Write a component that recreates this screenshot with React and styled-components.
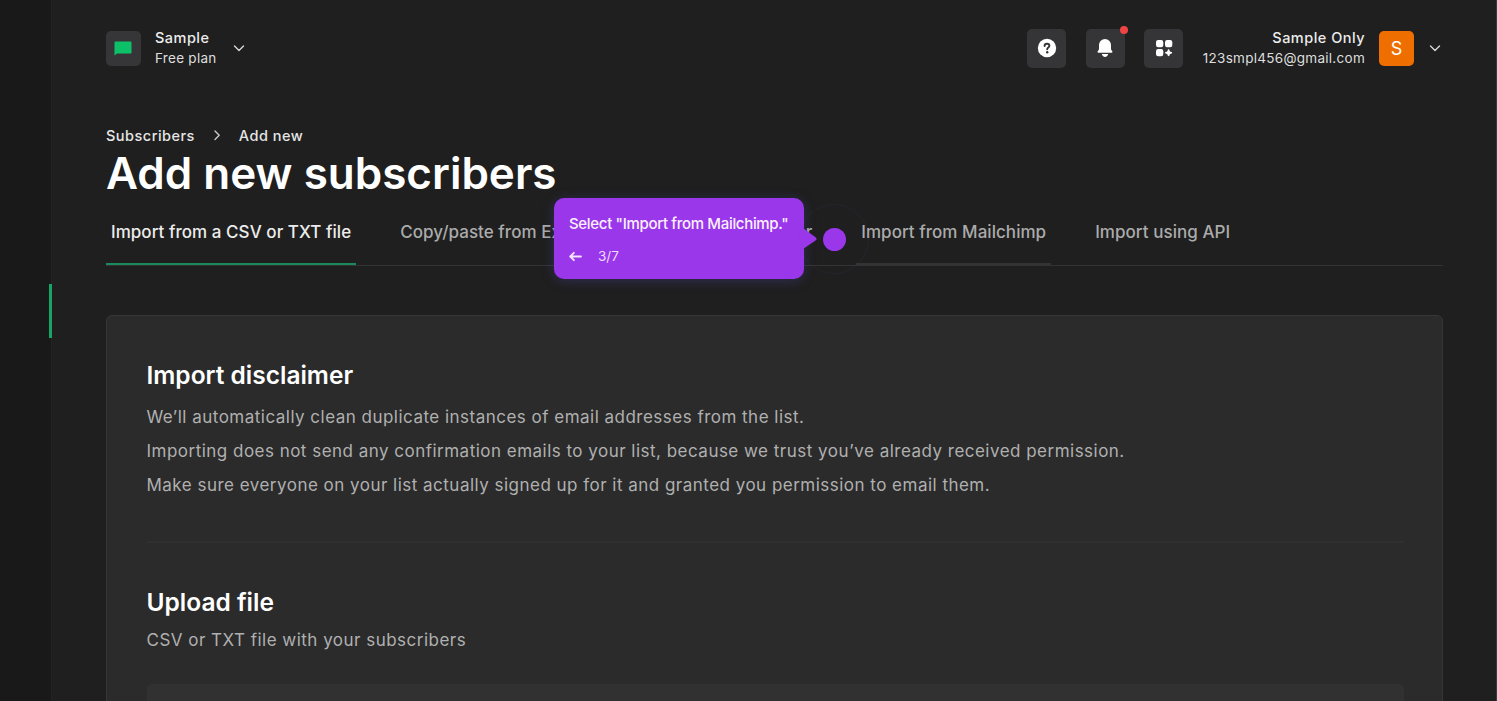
import React from 'react'
import styled, { createGlobalStyle } from 'styled-components'

const tabs = [
  { label: 'Import from a CSV or TXT file', active: true },
  { label: 'Copy/paste from Excel' },
  { label: 'Add single subscriber' },
  { label: 'Import from Mailchimp', hovered: true },
  { label: 'Import using API' },
]

function Chevron({ right }) {
  return right ? (
    <svg width="8" height="12" viewBox="0 0 8 12" fill="none" stroke="#c9c9c9" strokeWidth="1.4" strokeLinecap="round" strokeLinejoin="round">
      <path d="M2 2 6.2 6.2 2 10.4" />
    </svg>
  ) : (
    <svg width="12" height="8" viewBox="0 0 12 8" fill="none" stroke="#d6d6d6" strokeWidth="1.4" strokeLinecap="round" strokeLinejoin="round">
      <path d="M1.5 2 6 6.500 10.500 2" />
    </svg>
  )
}

function App() {
  return (
    <Page>
      <GlobalStyle />
      <Sidebar>
        <Marker />
      </Sidebar>
      <Main>
        <Header>
          <Account>
            <Logo>
              <svg width="18" height="15" viewBox="0 0 18 15" fill="#0cc168">
                <path d="M1.6 0.5h14.8c.7 0 1.1.4 1.1 1.1v9.8c0 .7-.4 1.1-1.1 1.1H3L.5 14.5V1.6C.5.9.9.5 1.6.5z" />
              </svg>
            </Logo>
            <Lines>
              <Name>Sample</Name>
              <Detail>Free plan</Detail>
            </Lines>
            <Chevron />
          </Account>
          <Tools>
            <Tool>
              <svg width="20" height="20" viewBox="0 0 20 20" fill="none">
                <circle cx="10" cy="10" r="9.2" fill="#fff" />
                <path d="M7.6 8c0-1.4 1-2.3 2.4-2.3s2.400.9 2.400 2.100c0 1.600-2.200 1.800-2.200 3.400" stroke="#333335" strokeWidth="1.900" strokeLinecap="round" />
                <circle cx="10.200" cy="14.200" r="1.200" fill="#333335" />
              </svg>
            </Tool>
            <Tool>
              <svg width="18" height="20" viewBox="0 0 18 20" fill="#fff">
                <path d="M9 1a6 6 0 0 0-6 6v3.400c0 1-.4 1.800-1.100 2.700-.6.8-.4 1.700.6 1.700h13c1 0 1.200-.9.6-1.700-.7-.9-1.100-1.700-1.100-2.700V7a6 6 0 0 0-6-6z" />
                <path d="M5.800 16h6.400c-.4 1.800-1.600 2.900-3.200 2.900S6.200 17.800 5.800 16z" />
              </svg>
              <Dot />
            </Tool>
            <Tool>
              <svg width="18" height="18" viewBox="0 0 18 18" fill="#fff">
                <rect x="1" y="1" width="7.300" height="7.300" rx="2.200" />
                <rect x="10" y="1" width="7.300" height="7.300" rx="2.200" />
                <rect x="1" y="10" width="7.300" height="7.300" rx="2.200" />
                <path d="M13.600 10.200c.6 0 .8.400 1 1.200.2.900.4 1.100 1.300 1.300.8.200 1.200.4 1.200 1s-.4.800-1.200 1c-.9.200-1.100.4-1.300 1.300-.2.800-.4 1.200-1 1.200s-.8-.4-1-1.200c-.2-.9-.4-1.100-1.300-1.300-.8-.2-1.200-.4-1.200-1s.4-.8 1.200-1c.9-.2 1.100-.4 1.300-1.300.2-.8.4-1.200 1-1.200z" />
              </svg>
            </Tool>
          </Tools>
          <User>
            <Lines $right>
              <Name>Sample Only</Name>
              <Detail>123smpl456@gmail.com</Detail>
            </Lines>
            <Avatar>S</Avatar>
            <Chevron />
          </User>
        </Header>
        <Crumbs>
          <span>Subscribers</span>
          <Chevron right />
          <span>Add new</span>
        </Crumbs>
        <Title>Add new subscribers</Title>
        <Tabs>
          {tabs.map((tab) => (
            <Tab key={tab.label} $active={tab.active} $hovered={tab.hovered}>{tab.label}</Tab>
          ))}
        </Tabs>
        <Panel>
          <Heading>Import disclaimer</Heading>
          <Text>We’ll automatically clean duplicate instances of email addresses from the list.</Text>
          <Text>Importing does not send any confirmation emails to your list, because we trust you’ve already received permission.</Text>
          <Text>Make sure everyone on your list actually signed up for it and granted you permission to email them.</Text>
          <Divider />
          <Heading $gap="4px">Upload file</Heading>
          <Text>CSV or TXT file with your subscribers</Text>
          <DropZone />
        </Panel>
      </Main>
      <Tooltip>
        <TipText>Select "Import from Mailchimp."</TipText>
        <TipNav>
          <svg width="13" height="11" viewBox="0 0 13 11" fill="none" stroke="#f3e4ff" strokeWidth="1.8" strokeLinecap="round" strokeLinejoin="round">
            <path d="M12 5.5H1.200M4.900 1.800 1.200 5.500l3.700 3.700" />
          </svg>
          <span>3/7</span>
        </TipNav>
        <TipArrow width="15" height="22" viewBox="0 0 15 22" fill="#9a37ea">
          <path d="M0 0 12.500 9.200q2.200 1.800 0 3.300L0 21z" />
        </TipArrow>
      </Tooltip>
      <Ring>
        <Beacon />
      </Ring>
    </Page>
  )
}

const GlobalStyle = createGlobalStyle`
    *{
        box-sizing: border-box;
    }
    body{
        margin: 0;
        background-color: #1f1f1f;
    }
`

const Page = styled.div`
    position: relative;
    display: flex;
    width: 100%;
    height: 701px;
    overflow: hidden;
    background-color: #1f1f1f;
    border-right: 1px solid #3b3b46;
    font-family: Inter, "Liberation Sans", sans-serif;
    white-space: nowrap;
`

const Sidebar = styled.div`
    flex: 0 0 52px;
    display: flex;
    justify-content: flex-end;
    background-color: #191919;
    border-right: 1px solid #232323;
`

const Marker = styled.div`
    width: 3px;
    height: 54px;
    margin-top: 284px;
    margin-right: -1px;
    background-color: #14a567;
`

const Main = styled.div`
    flex: 1;
    display: flex;
    flex-direction: column;
    padding: 0 53px 0 54px;
`

const Header = styled.div`
    flex: 0 0 96px;
    display: flex;
    align-items: center;
`

const Account = styled.div`
    display: flex;
    align-items: center;
    & > svg{
        margin-left: 16px;
    }
`

const Logo = styled.div`
    width: 35px;
    height: 35px;
    margin-right: 14px;
    padding-right: 1px;
    display: flex;
    align-items: center;
    justify-content: center;
    border-radius: 5px;
    background-color: #363638;
`

const Lines = styled.div`
    display: flex;
    flex-direction: column;
    align-items: ${(props) => (props.$right ? 'flex-end' : 'flex-start')};
`

const Name = styled.div`
    font-size: 14.5px;
    line-height: 20px;
    font-weight: 500;
    letter-spacing: 0.48px;
    color: #ececec;
`

const Detail = styled.div`
    font-size: 13.5px;
    line-height: 20px;
    letter-spacing: 0.28px;
    color: #dedede;
`

const Tools = styled.div`
    display: flex;
    gap: 19.5px;
    margin-left: auto;
`

const Tool = styled.div`
    position: relative;
    width: 39px;
    height: 39px;
    display: flex;
    align-items: center;
    justify-content: center;
    border-radius: 5px;
    background-color: #353537;
`

const Dot = styled.div`
    position: absolute;
    top: -3px;
    right: -3px;
    width: 8px;
    height: 8px;
    border-radius: 50%;
    background-color: #ef4444;
`

const User = styled.div`
    display: flex;
    align-items: center;
    margin-left: 19.5px;
    & > svg{
        margin-left: 15px;
        margin-right: 2px;
    }
`

const Avatar = styled.div`
    width: 35px;
    height: 35px;
    margin-left: 14px;
    border-radius: 5px;
    background-color: #ee6f00;
    color: #fff;
    font-size: 18px;
    line-height: 35px;
    text-align: center;
`

const Crumbs = styled.div`
    flex: 0 0 20px;
    display: flex;
    align-items: center;
    margin-top: 29px;
    font-size: 14.5px;
    font-weight: 500;
    letter-spacing: 0.48px;
    color: #e6e6e6;
    & svg{
        margin: 0 18px;
    }
`

const Title = styled.h1`
    margin: 1px 0 0;
    font-size: 44px;
    line-height: 54px;
    font-weight: 600;
    color: #fff;
`

const Tabs = styled.div`
    flex: 0 0 65px;
    display: flex;
    gap: 39px;
    border-bottom: 1px solid #333;
`

const Tab = styled.div`
    height: 65px;
    padding: 0 5px;
    font-size: 17px;
    line-height: 65px;
    font-weight: 500;
    letter-spacing: 0.045px;
    color: ${(props) => (props.$active ? '#ececec' : '#ababab')};
    border-bottom: 2px solid ${(props) => (props.$active ? '#1a8a5e' : props.$hovered ? '#333' : 'transparent')};
`

const Panel = styled.div`
    flex: 0 0 auto;
    margin-top: 49px;
    height: 500px;
    padding: 42px 38px 0 39.5px;
    border: 1px solid #363636;
    border-radius: 6px;
    background-color: #2b2b2b;
`

const Heading = styled.h2`
    margin: 0 0 ${(props) => props.$gap || '8px'};
    font-size: 24.5px;
    line-height: 34px;
    font-weight: 600;
    color: #fff;
`

const Text = styled.p`
    margin: 0;
    font-size: 17px;
    line-height: 34.2px;
    letter-spacing: 0.483px;
    color: #b0b0b0;
`

const Divider = styled.div`
    height: 2px;
    margin: 38.4px 0 42px;
    background-color: #303030;
`

const DropZone = styled.div`
    height: 120px;
    margin-top: 27px;
    border-radius: 5px;
    background-color: #313131;
`

const Tooltip = styled.div`
    position: absolute;
    left: 554px;
    top: 198px;
    width: 250px;
    height: 81px;
    padding: 15px 15px 0;
    border-radius: 10px;
    background-color: #9a37ea;
    box-shadow: 0 2px 12px rgba(70, 70, 160, 0.4);
    color: #faf0ff;
`

const TipText = styled.div`
    font-size: 15px;
    line-height: 22px;
    font-weight: 500;
    letter-spacing: -0.32px;
`

const TipNav = styled.div`
    display: flex;
    align-items: center;
    gap: 16px;
    margin-top: 11px;
    font-size: 13.5px;
    line-height: 20px;
    color: #f0dcff;
`

const TipArrow = styled.svg`
    position: absolute;
    left: 249px;
    top: 30px;
`

const Ring = styled.div`
    position: absolute;
    left: 799px;
    top: 204px;
    width: 70px;
    height: 70px;
    display: flex;
    align-items: center;
    justify-content: center;
    border: 1px solid rgba(90, 80, 170, 0.1);
    border-radius: 50%;
`

const Beacon = styled.div`
    width: 23px;
    height: 23px;
    border-radius: 50%;
    background-color: #9a37ea;
`

export default App
